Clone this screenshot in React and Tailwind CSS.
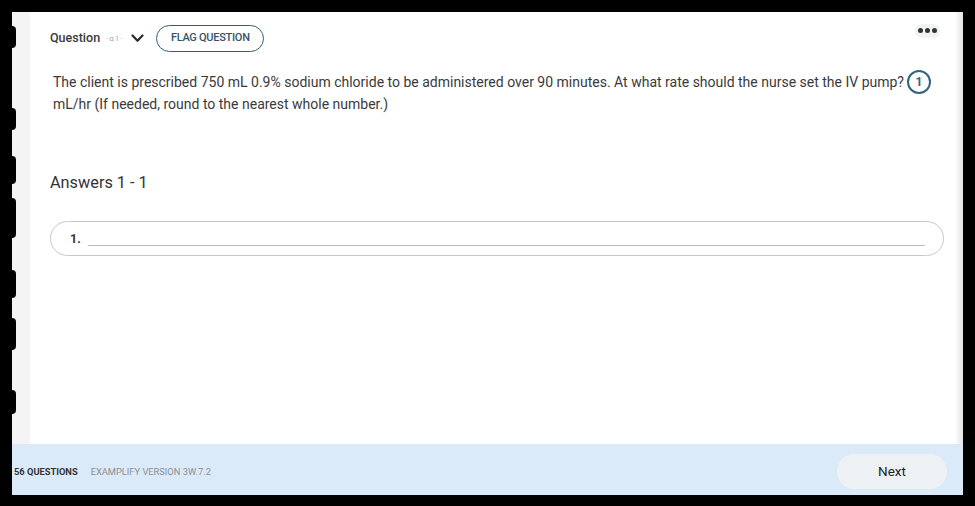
import React from 'react';

const blobs = [
  { mt: 'mt-[14px]', h: 'h-[22px]' },
  { mt: 'mt-[60px]', h: 'h-[22px]' },
  { mt: 'mt-[26px]', h: 'h-[28px]' },
  { mt: 'mt-[14px]', h: 'h-[40px]' },
  { mt: 'mt-[32px]', h: 'h-[28px]' },
  { mt: 'mt-[20px]', h: 'h-[32px]' },
  { mt: 'mt-[40px]', h: 'h-[24px]' },
];

export default function App() {
  return (
    <div className="w-[975px] h-[506px] bg-black pt-[12px] pl-[12px] pr-[12px] pb-[11px] overflow-hidden" style={{ fontFamily: 'Roboto, "Liberation Sans", sans-serif' }}>
      <div className="w-full h-full flex flex-col bg-white">
        <div className="flex flex-1 min-h-0">
          {/* left strip with photo edge blobs */}
          <div className="w-[18px] bg-[#f4f4f4] flex">
            <div className="w-[4px] flex flex-col">
              {blobs.map((b, i) => (
                <div key={i} className={`${b.mt} ${b.h} w-[4px] bg-black rounded-r-full`} />
              ))}
            </div>
          </div>

          <div className="flex-1 flex flex-col pl-[20px] pr-[11px] text-[#333]">
            {/* header */}
            <div className="flex items-center h-[27px] mt-[13px]">
              <span className="text-[12.5px] font-medium text-[#3a3a3a]">Question</span>
              <span className="ml-[6px] text-[8px] text-[#aaa] tracking-[1px]">·α1·</span>
              <svg className="ml-[8px]" width="13" height="9" viewBox="0 0 13 9" fill="none">
                <path d="M1.5 1.5 L6.5 6.8 L11.5 1.5" stroke="#2b2b2b" strokeWidth="2.2" strokeLinecap="round" strokeLinejoin="round" />
              </svg>
              <button className="ml-[12px] h-[27px] w-[108px] rounded-full border border-[#2f5f7a] text-[11px] font-medium text-[#35556b] tracking-tight">
                FLAG QUESTION
              </button>
              <div className="ml-auto -mt-[16px] mr-[4px] h-[14px] px-[3px] rounded-full bg-[#f0f3f6] flex items-center gap-[2px]">
                <span className="w-[5px] h-[5px] rounded-full bg-[#333]" />
                <span className="w-[5px] h-[5px] rounded-full bg-[#333]" />
                <span className="w-[5px] h-[5px] rounded-full bg-[#333]" />
              </div>
            </div>

            {/* question */}
            <div className="mt-[18px] pl-[3px] text-[14px] leading-[22px] text-[#3a3a3a]">
              <div className="flex items-center">
                <span>The client is prescribed 750 mL 0.9% sodium chloride to be administered over 90 minutes. At what rate should the nurse set the IV pump?</span>
                <span className="ml-[3px] w-[24px] h-[24px] rounded-full border-2 border-[#35637d] flex items-center justify-center text-[12px] font-bold text-[#35637d]">1</span>
              </div>
              <div className="-mt-[1px]">mL/hr (If needed, round to the nearest whole number.)</div>
            </div>

            {/* answers */}
            <div className="mt-[56px] text-[16.3px] text-[#333]">Answers 1 - 1</div>

            <div className="mt-[26px] h-[35px] rounded-full border border-[#c8c8c8] flex items-center pl-[19px] pr-[18px]">
              <span className="text-[12.5px] font-bold text-[#333]">1.</span>
              <div className="flex-1 ml-[7px] mt-[14px] border-b border-[#bdbdbd]" />
            </div>
          </div>

          {/* right fading edge */}
          <div className="w-[8px] bg-gradient-to-r from-white to-[#e2e2e2]" />
        </div>

        {/* footer */}
        <div className="h-[51px] bg-[#dbeaf8] flex items-center pl-[2px] pr-[16px] pt-[4px]">
          <span className="text-[9.3px] font-bold text-[#333]">56 QUESTIONS</span>
          <span className="ml-[13px] text-[9.3px] text-[#8a8f94]">EXAMPLIFY VERSION 3W.7.2</span>
          <button className="ml-auto w-[110px] h-[35px] rounded-full bg-[#eef1f4] text-[13.5px] text-[#222]">Next</button>
        </div>
      </div>
    </div>
  );
}
